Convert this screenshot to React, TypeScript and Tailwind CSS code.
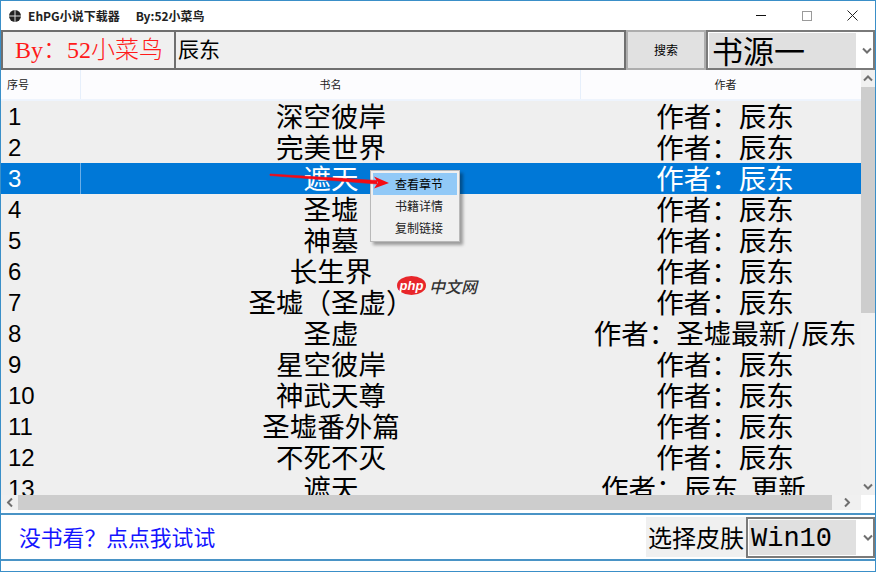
const rows: [string, string, string][] = [
  ["1", "深空彼岸", "作者：辰东"],
  ["2", "完美世界", "作者：辰东"],
  ["3", "遮天", "作者：辰东"],
  ["4", "圣墟", "作者：辰东"],
  ["5", "神墓", "作者：辰东"],
  ["6", "长生界", "作者：辰东"],
  ["7", "圣墟（圣虚）", "作者：辰东"],
  ["8", "圣虚", "作者：圣墟最新 / 辰东"],
  ["9", "星空彼岸", "作者：辰东"],
  ["10", "神武天尊", "作者：辰东"],
  ["11", "圣墟番外篇", "作者：辰东"],
  ["12", "不死不灭", "作者：辰东"],
  ["13", "遮天", "作者：辰东  更新       "],
];

function Chevron({ className = "" }: { className?: string }) {
  return (
    <svg width="10" height="7" viewBox="0 0 10 7" className={`shrink-0 ${className}`}>
      <path d="M1 1.5 L5 5.5 L9 1.5" fill="none" stroke="#6f6f6f" strokeWidth="2" />
    </svg>
  );
}

export default function App() {
  const cjk = "font-['Noto_Sans_CJK_SC','Liberation_Sans',sans-serif]";
  return (
    <div className={`w-[876px] h-[572px] bg-white border border-[#3a8fc8] flex flex-col overflow-hidden relative ${cjk}`}>
      {/* title bar */}
      <div className="h-[29px] shrink-0 flex items-center bg-white">
        <svg width="14" height="14" viewBox="0 0 14 14" className="ml-[7px]">
          <circle cx="7" cy="7" r="6" fill="#222" />
          <path d="M7 1V13M1 7H13" stroke="#ddd" strokeWidth="1" />
        </svg>
        <span className="ml-[6px] text-[12px] font-bold text-[#222]">EhPG小说下载器</span>
        <span className="ml-[16px] text-[12px] font-bold text-[#222]">By:52小菜鸟</span>
        <div className="ml-auto flex items-center h-full">
          <div className="w-[47px] flex justify-center"><div className="w-[10px] h-px bg-[#111]" /></div>
          <div className="w-[45px] flex justify-center"><div className="w-[10px] h-[10px] border border-[#9a9a9a]" /></div>
          <div className="w-[46px] flex justify-center">
            <svg width="11" height="11" viewBox="0 0 11 11"><path d="M.5 .5L10.5 10.5M10.5 .5L.5 10.5" stroke="#222" strokeWidth="1" fill="none" /></svg>
          </div>
        </div>
      </div>

      {/* toolbar */}
      <div className="h-[40px] shrink-0 flex">
        <div className="w-[175px] shrink-0 border-2 border-[#6f6f6f] bg-[#f0f0f0] flex items-center pl-[12px] whitespace-nowrap text-[#ff1a1a] text-[24px] font-light leading-none font-['Liberation_Serif','Noto_Sans_CJK_SC',serif]">
          By：52小菜鸟
        </div>
        <div className="w-[450px] shrink-0 border-2 border-l-0 border-[#6f6f6f] bg-[#efefef] flex items-center pl-[2px] pb-[2px] text-[21px] text-black">
          辰东
        </div>
        <div className="w-[80px] shrink-0 border-2 border-[#adadad] bg-[#e1e1e1] flex items-center justify-center text-[12px] text-black">
          搜索
        </div>
        <div className="flex-1 min-w-0 border-2 border-[#7a7a7a] bg-white flex items-center p-[1px]">
          <div className="w-[147px] h-[35px] shrink-0 bg-[#e0e0e0] flex items-center pl-[3px] pb-[2px] text-[31px] leading-none text-black">书源一</div>
          <Chevron className="ml-[6px]" />
        </div>
      </div>

      {/* table */}
      <div className="h-[443px] shrink-0 flex flex-col relative bg-white">
        <div className="flex-1 min-h-0 flex bg-[#efefef]">
          <div className="flex-1 min-w-0 flex flex-col overflow-hidden">
            <div className="h-[31px] shrink-0 flex bg-[#fcfcfe] border-b-2 border-[#eef4fd] text-[11px] text-[#222]">
              <div className="w-[80px] pl-[6px] border-r border-[#e6effb] flex items-center">序号</div>
              <div className="w-[500px] border-r border-[#e6effb] flex items-center justify-center">书名</div>
              <div className="flex-1 flex items-center justify-center pl-[9px]">作者</div>
            </div>
            <div className="flex-1 min-h-0 overflow-hidden">
              {rows.map(([n, name, author]) => {
                const sel = n === "3";
                const parts = author.split(" / ");
                return (
                  <div key={n} className={`h-[31px] flex items-center text-[27.5px] leading-none whitespace-pre ${sel ? "bg-[#0078d7] text-white" : "text-black"}`}>
                    <div className={`w-[80px] shrink-0 pl-[7px] text-[24px] font-['Liberation_Sans',sans-serif] h-full flex items-center ${sel ? "border-r border-[#6aaee8]" : ""}`}>{n}</div>
                    <div className="w-[500px] shrink-0 text-center pb-[2px]">{name}</div>
                    <div className="w-[288px] shrink-0 text-center pb-[2px]">
                      {parts.length > 1 ? (
                        <>
                          {parts[0]}
                          <span className="px-[2px]">/</span>
                          {parts[1]}
                        </>
                      ) : (
                        author
                      )}
                    </div>
                  </div>
                );
              })}
            </div>
          </div>
          {/* vertical scrollbar */}
          <div className="w-[14px] shrink-0 flex flex-col bg-[#f0f0f0] items-center">
            <div className="h-[17px] flex items-center justify-center"><Chevron className="rotate-180" /></div>
            <div className="w-full h-[226px] bg-[#cdcdcd]" />
            <div className="flex-1" />
            <div className="h-[17px] flex items-center justify-center"><Chevron /></div>
          </div>
        </div>
        {/* horizontal scrollbar */}
        <div className="h-[15px] shrink-0 flex items-center bg-white pr-[14px]">
          <div className="w-[17px] h-full bg-[#f0f0f0] flex items-center justify-center"><Chevron className="rotate-90" /></div>
          <div className="w-[814px] h-full bg-[#cdcdcd]" />
          <div className="flex-1 h-full bg-[#f0f0f0] flex items-center justify-center"><Chevron className="-rotate-90" /></div>
        </div>
        <div className="h-[3px] shrink-0 bg-white" />

        {/* context menu */}
        <div className="absolute left-[369px] top-[100px] w-[90px] h-[72px] bg-[#f0f0f0] border border-[#b9b9b9] shadow-[3px_3px_3px_rgba(0,0,0,0.35)] p-[2px] text-[12px] text-[#222] leading-none">
          <div className="h-[22px] bg-[#91c9f7] flex items-center pl-[22px] text-black">查看章节</div>
          <div className="h-[22px] flex items-center pl-[22px]">书籍详情</div>
          <div className="h-[22px] flex items-center pl-[22px]">复制链接</div>
        </div>

        {/* red annotation arrow */}
        <svg width="125" height="20" viewBox="0 0 125 20" className="absolute left-[267px] top-[103px]">
          <path d="M2 1 L109 7.5 L109 11 L2 2.5 Z" fill="#f50a14" stroke="#f50a14" strokeWidth="0.6" />
          <path d="M121 10 L106 3.5 L110 9.5 L106 15.5 Z" fill="#f50a14" />
        </svg>

        {/* watermark */}
        <div className="absolute left-[396px] top-[206px] flex items-center gap-[3px]">
          <div className="w-[29px] h-[19px] rounded-[50%] bg-[#e8262a] flex items-center justify-center text-white italic font-bold text-[13px] leading-none font-['Liberation_Sans',sans-serif]">php</div>
          <span className="text-[16px] italic font-medium leading-none text-[#333]">中文网</span>
        </div>
      </div>

      {/* bottom bar */}
      <div className="h-[46px] shrink-0 border-t-2 border-[#4a94c6] flex items-center bg-white">
        <span className="ml-[18px] text-[21.8px] leading-none text-[#1414ff]">没书看？点点我试试</span>
        <div className="ml-auto h-[40px] w-[100px] bg-[#f0f0f0] flex items-center justify-center text-[24px] leading-none text-black whitespace-nowrap">选择皮肤</div>
        <div className="w-[129px] h-[41px] border-2 border-[#7a7a7a] bg-white flex items-center p-[1px]">
          <div className="w-[107px] h-[35px] shrink-0 bg-[#e0e0e0] flex items-center pl-[2px] pt-[5px] text-[27px] leading-none text-black font-['Liberation_Mono',monospace]">Win10</div>
          <Chevron className="ml-[7px]" />
        </div>
      </div>
      <div className="h-[12px] shrink-0 border-t-2 border-[#4a94c6] bg-white" />
    </div>
  );
}
